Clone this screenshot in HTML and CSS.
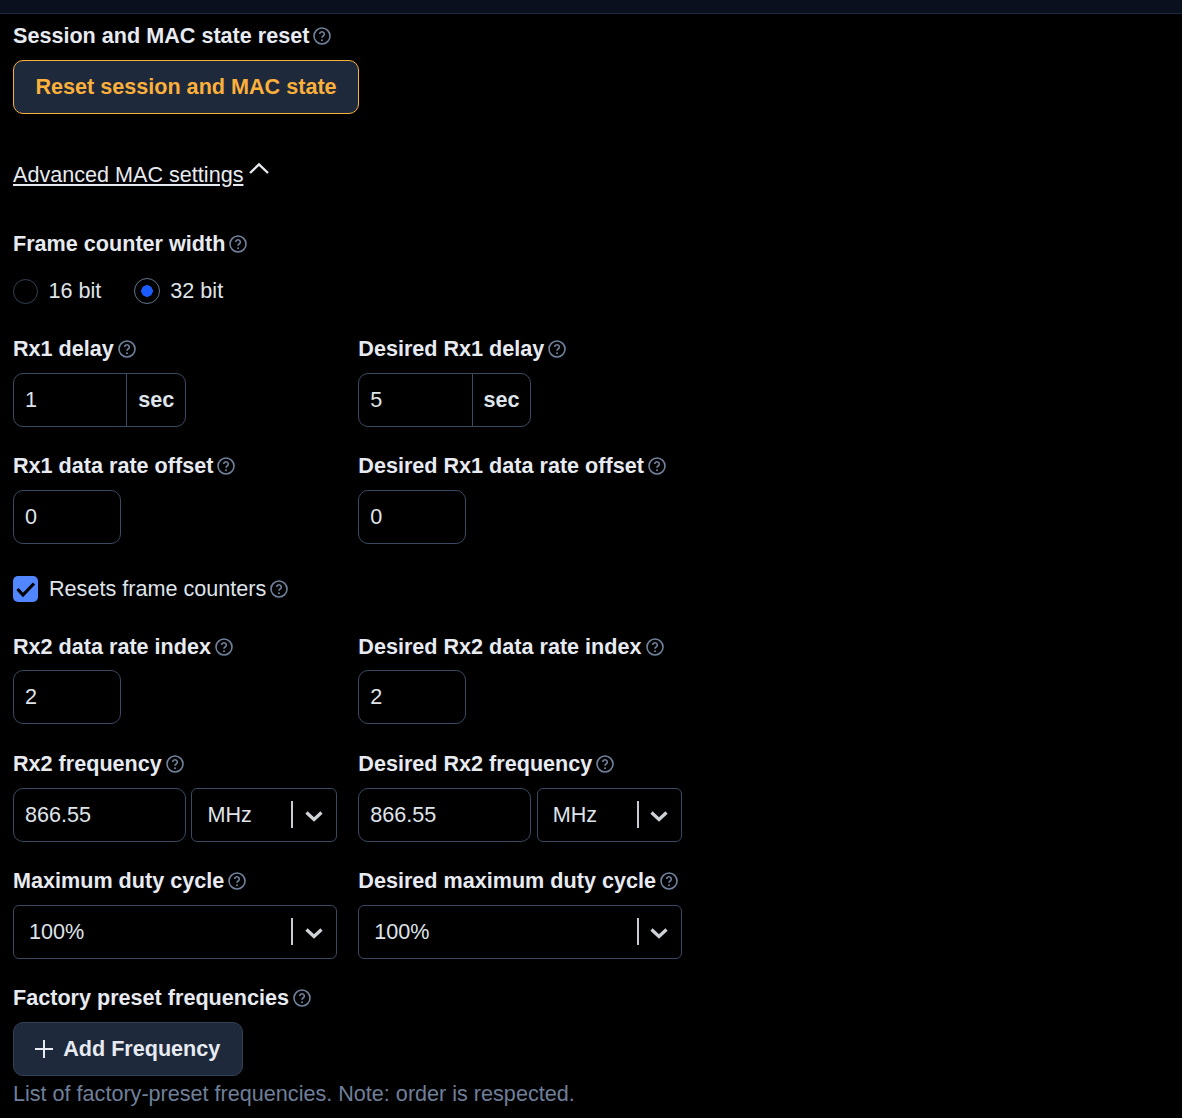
FILE: index.html
```html
<!DOCTYPE html>
<html lang="en">
<head>
<meta charset="utf-8">
<title>Advanced MAC settings</title>
<link rel="stylesheet" href="styles.css">
</head>
<body>
<svg class="defs" width="0" height="0" aria-hidden="true">
  <symbol id="help" viewBox="0 0 18 18">
    <circle cx="9" cy="9" r="8" fill="none" stroke="currentColor" stroke-width="1.6"/>
    <path d="M6.700 7.100a2.300 2.300 0 1 1 3.500 1.950c-.8.5-1.200 .9-1.200 1.650" fill="none" stroke="currentColor" stroke-width="1.600"/>
    <circle cx="9" cy="13.200" r="1" fill="currentColor"/>
  </symbol>
  <symbol id="chev" viewBox="0 0 18 12">
    <path d="M1.500 2.500 9 9.500l7.500-7" fill="none" stroke="currentColor" stroke-width="3.200"/>
  </symbol>
</svg>
<div class="topbar"></div>
<main class="form">
  <section class="block">
    <div class="label">Session and MAC state reset <svg class="help"><use href="#help"/></svg></div>
    <button class="btn btn-warn" type="button">Reset session and MAC state</button>
  </section>
  <div class="collapse">
    <a class="collapse-link" href="#">Advanced MAC settings</a>
    <svg class="collapse-icon" viewBox="0 0 22 13"><path d="M2 11 11 2.500l9 8.500" fill="none" stroke="currentColor" stroke-width="2.400"/></svg>
  </div>
  <section class="block block-frame">
    <div class="label">Frame counter width <svg class="help"><use href="#help"/></svg></div>
    <div class="radios">
      <label class="radio"><span class="radio-dot"></span>16 bit</label>
      <label class="radio radio-on"><span class="radio-dot"></span>32 bit</label>
    </div>
  </section>
  <div class="grid">
    <div class="field">
      <div class="label">Rx1 delay <svg class="help"><use href="#help"/></svg></div>
      <div class="input input-unit"><span class="value">1</span><span class="unit">sec</span></div>
    </div>
    <div class="field">
      <div class="label">Desired Rx1 delay <svg class="help"><use href="#help"/></svg></div>
      <div class="input input-unit"><span class="value">5</span><span class="unit">sec</span></div>
    </div>
    <div class="field">
      <div class="label">Rx1 data rate offset <svg class="help"><use href="#help"/></svg></div>
      <div class="input input-small"><span class="value">0</span></div>
    </div>
    <div class="field">
      <div class="label">Desired Rx1 data rate offset <svg class="help"><use href="#help"/></svg></div>
      <div class="input input-small"><span class="value">0</span></div>
    </div>
  </div>
  <label class="check">
    <span class="check-box"><svg viewBox="0 0 25 26"><path d="m4.500 13 5.500 6 11-11.500" fill="none" stroke="#000" stroke-width="3.200"/></svg></span>
    Resets frame counters <svg class="help"><use href="#help"/></svg>
  </label>
  <div class="grid grid-lower">
    <div class="field">
      <div class="label">Rx2 data rate index <svg class="help"><use href="#help"/></svg></div>
      <div class="input input-small"><span class="value">2</span></div>
    </div>
    <div class="field">
      <div class="label">Desired Rx2 data rate index <svg class="help"><use href="#help"/></svg></div>
      <div class="input input-small"><span class="value">2</span></div>
    </div>
    <div class="field">
      <div class="label">Rx2 frequency <svg class="help"><use href="#help"/></svg></div>
      <div class="pair">
        <div class="input input-freq"><span class="value">866.55</span></div>
        <div class="select select-unit"><span class="select-value">MHz</span><span class="sep"></span><svg class="chev"><use href="#chev"/></svg></div>
      </div>
    </div>
    <div class="field">
      <div class="label">Desired Rx2 frequency <svg class="help"><use href="#help"/></svg></div>
      <div class="pair">
        <div class="input input-freq"><span class="value">866.55</span></div>
        <div class="select select-unit"><span class="select-value">MHz</span><span class="sep"></span><svg class="chev"><use href="#chev"/></svg></div>
      </div>
    </div>
    <div class="field">
      <div class="label">Maximum duty cycle <svg class="help"><use href="#help"/></svg></div>
      <div class="select"><span class="select-value">100%</span><span class="sep"></span><svg class="chev"><use href="#chev"/></svg></div>
    </div>
    <div class="field">
      <div class="label">Desired maximum duty cycle <svg class="help"><use href="#help"/></svg></div>
      <div class="select"><span class="select-value">100%</span><span class="sep"></span><svg class="chev"><use href="#chev"/></svg></div>
    </div>
  </div>
  <section class="block block-factory">
    <div class="label">Factory preset frequencies <svg class="help"><use href="#help"/></svg></div>
    <button class="btn btn-add" type="button"><svg class="plus" viewBox="0 0 20 20"><path d="M10 1v18M1 10h18" fill="none" stroke="currentColor" stroke-width="2"/></svg>Add Frequency</button>
    <p class="hint">List of factory-preset frequencies. Note: order is respected.</p>
  </section>
</main>
</body>
</html>
```
FILE: styles.css
```css
* { box-sizing: border-box; }
html, body { margin: 0; background: #000; }
body {
  height: 1118px;
  overflow: hidden;
  color: #e7ebf1;
  font-family: "Liberation Sans", Arial, sans-serif;
  font-size: 21.600px;
  line-height: 24px;
}
.defs { position: absolute; }
.topbar { height: 14px; background: #0a101d; border-bottom: 1px solid #1e293b; }
.form { padding: 10px 13px 0; }
.label {
  display: flex;
  align-items: center;
  height: 24px;
  font-weight: 700;
  gap: 4px;
  white-space: nowrap;
}
.help { width: 18px; height: 18px; color: #71829c; flex: none; }
.btn {
  display: flex;
  align-items: center;
  justify-content: center;
  height: 54px;
  margin-top: 12px;
  border-radius: 10px;
  background: #1e293b;
  font: inherit;
  font-weight: 700;
  cursor: pointer;
}
.btn-warn { width: 346px; border: 1px solid #fbb03b; color: #fbb03b; }
.btn-add { width: 230px; border: 1px solid #334155; color: #e7ebf1; gap: 9.500px; }
.plus { width: 20px; height: 20px; margin-left: -2px; }
.collapse { display: flex; align-items: flex-start; margin-top: 49px; height: 24px; gap: 5px; }
.collapse-link { color: #e7ebf1; text-decoration: underline; text-underline-offset: 2px; }
.collapse-icon { width: 22px; height: 13px; margin-top: -1px; color: #e7ebf1; }
.block-frame { margin-top: 45px; }
.radios { display: flex; gap: 33px; margin-top: 22px; height: 26px; }
.radio { display: flex; align-items: center; gap: 10.500px; color: #dfe4ea; }
.radio-dot { width: 25px; height: 25px; border: 1px solid #334155; border-radius: 50%; }
.radio-on { gap: 10px; }
.radio-on .radio-dot { width: 26px; height: 26px; border-color: #64748b; background: radial-gradient(circle, #1a5cff 0 5.500px, transparent 6px); }
.grid { display: grid; grid-template-columns: 323.900px 323.900px; column-gap: 21.400px; row-gap: 27.600px; margin-top: 33px; }
.field { display: flex; flex-direction: column; gap: 11.700px; min-width: 0; }
.input, .select {
  display: flex;
  align-items: center;
  height: 54px;
  flex: none;
  border: 1px solid #3a4a63;
  color: #dfe4ea;
}
.input { border-radius: 10px; padding-left: 11px; }
.input-unit { width: 173px; }
.input-unit .value { flex: 1; }
.unit { align-self: stretch; display: flex; flex: none; width: 58.700px; justify-content: center; align-items: center; border-left: 1px solid #3a4a63; font-weight: 700; }
.input-small { width: 108px; }
.pair { display: flex; gap: 5.500px; }
.input-freq { width: 172.900px; }
.select { border-radius: 6px; padding-left: 15px; }
.select-unit { flex: 1; }
.select-value { flex: 1; }
.sep { width: 2px; height: 27px; background: #c8ccd2; }
.chev { width: 18px; height: 12px; margin: 2px 13px 0 11.500px; color: #cfd3d8; }
.check { display: flex; align-items: center; height: 26px; margin-top: 32px; color: #dfe4ea; }
.check-box { width: 25px; height: 26px; margin-right: 11px; border-radius: 5px; background: #5286ff; }
.check-box svg { display: block; width: 25px; height: 26px; }
.check .help { margin-left: 4px; }
.grid-lower { margin-top: 32.600px; }
.block-factory { margin-top: 27.400px; }
.hint { margin: 6px 0 0; color: #6f7f99; }
```
